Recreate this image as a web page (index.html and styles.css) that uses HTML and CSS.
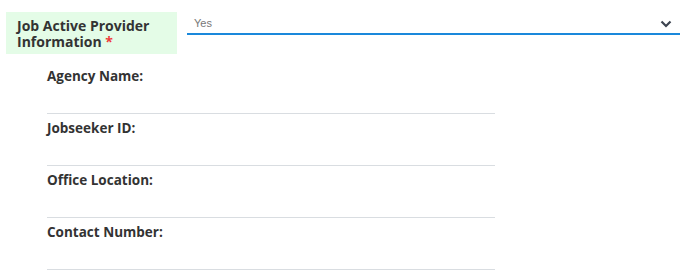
FILE: index.html
```html
<!DOCTYPE html>
<html>
<head>
<meta charset="utf-8">
<link rel="stylesheet" href="styles.css">
</head>
<body>
<div class="page">
  <div class="row">
    <div class="label-box">Job Active Provider Information <span class="req">*</span></div>
    <div class="select">
      <span class="value">Yes</span>
      <svg class="chev" width="12" height="8" viewBox="0 0 12 8"><path d="M1.5 1.5 L6 6 L10.5 1.5" fill="none" stroke="#3d4450" stroke-width="2.2"/></svg>
    </div>
  </div>
  <div class="fields">
    <div class="field"><div class="flabel">Agency Name:</div></div>
    <div class="field"><div class="flabel">Jobseeker ID:</div></div>
    <div class="field"><div class="flabel">Office Location:</div></div>
    <div class="field"><div class="flabel">Contact Number:</div></div>
  </div>
</div>
</body>
</html>
```
FILE: styles.css
```css
html, body { margin: 0; padding: 0; background: #fff; }
body { font-family: "Open Sans", "DejaVu Sans", sans-serif; color: #333; }
.page { padding: 12px 16px 0 6px; }
.row { display: flex; align-items: flex-start; gap: 10px; }
.label-box {
  width: 171px; box-sizing: border-box; height: 42px;
  background: #e4fce7; padding: 6px 10px 0 11px;
  font-size: 14px; font-weight: 700; line-height: 16px; color: #333;
}
.req { color: #ef3b3b; }
.select {
  flex: 1; height: 21px; border-bottom: 2px solid #1a88db;
  display: flex; align-items: center; justify-content: space-between;
  padding: 0 8px 0 7px; box-sizing: content-box;
}
.value { font-family: "Liberation Sans", sans-serif; font-size: 11px; color: #777; }
.chev { margin-top: 2px; }
.fields { margin-left: 41px; width: 448px; margin-top: 8px; }
.field { height: 51px; border-bottom: 1px solid #d9dde1; }
.flabel { font-size: 13.5px; font-weight: 700; padding-top: 6px; line-height: 17px; color: #333; }
```
